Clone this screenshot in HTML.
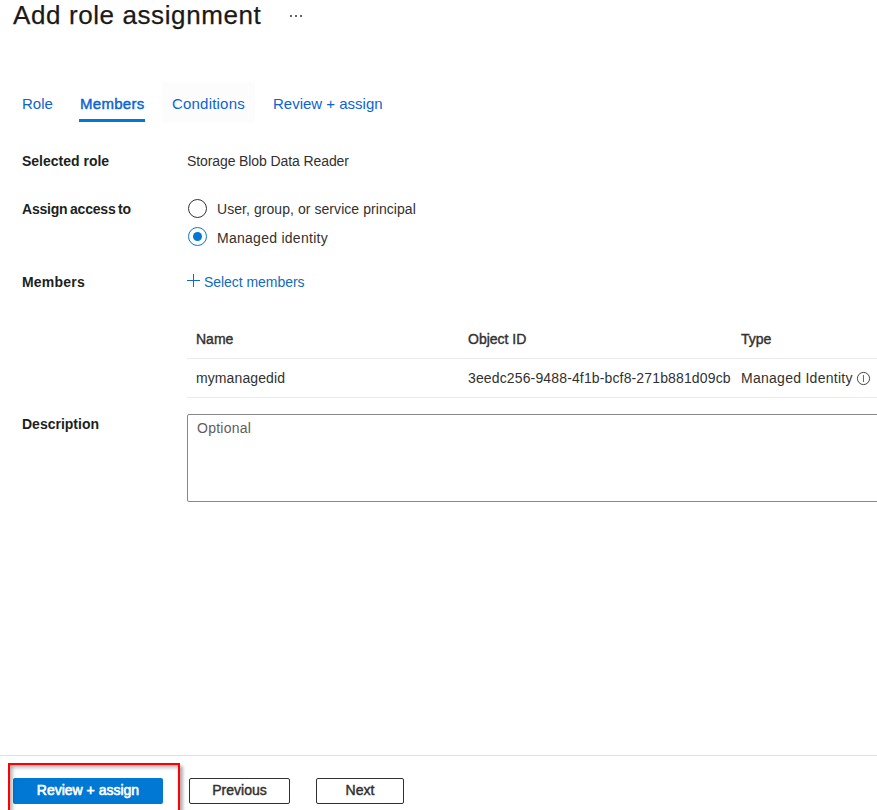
<!DOCTYPE html>
<html><head><meta charset="utf-8">
<style>
html,body{margin:0;padding:0;background:#fff;}
body{width:877px;height:810px;position:relative;overflow:hidden;font-family:"Liberation Sans",sans-serif;color:#323130;}
.a{position:absolute;white-space:nowrap;}
.title{left:13px;top:0px;font-size:26px;color:#1b1a19;letter-spacing:0.6px;-webkit-text-stroke:0.25px #1b1a19;}
.dots{left:290px;top:15px;}
.dots i{position:absolute;width:2px;height:2px;background:#323130;border-radius:1px;top:0}
.tab{top:95px;font-size:15px;color:#0c64d2;}
.semi{-webkit-text-stroke:0.45px currentColor;}
.tabhover{left:162px;top:82px;width:93px;height:40px;background:#fcfcfc;}
.uline{left:79px;top:119px;width:66px;height:3px;background:#0078d4;}
.lbl{left:22px;font-size:14px;font-weight:bold;color:#201f1e;}
.txt{font-size:14px;color:#323130;}
.radio{width:17px;height:17px;border:1px solid #323130;border-radius:50%;}
.radio.on{border-color:#0078d4;}
.radio.on i{position:absolute;left:4px;top:4px;width:9px;height:9px;border-radius:50%;background:#0078d4;}
.link{color:#0f6cbd;font-size:14px;}
.hline{height:1px;background:#edebe9;}
.th{font-size:14px;color:#323130;top:331px;-webkit-text-stroke:0.4px #323130;}
.td{font-size:14px;color:#323130;top:370px;}
.textarea{left:187px;top:414px;width:700px;height:86px;border:1px solid #8a8886;border-radius:2px;}
.ph{left:197px;top:420px;font-size:14px;color:#605e5c;letter-spacing:0.25px;}
.foot{left:0;top:755px;width:877px;height:1px;background:#e1dfdd;}
.btn{top:778px;height:24px;border:1px solid #323130;border-radius:2px;font-size:14px;text-align:center;line-height:23px;color:#323130;-webkit-text-stroke:0.45px currentColor;}
.primary{left:13px;width:150px;height:26px;border:none;background:#0078d4;color:#fff;line-height:25px;-webkit-text-stroke:0.6px #fff;}
.redbox{left:8px;top:763px;width:168px;height:60px;border:2px solid #ff0000;box-shadow:3px 3px 3px rgba(0,0,0,.3), inset 2px 2px 4px rgba(0,0,0,.35);}
</style></head>
<body>
<div class="a title">Add role assignment</div>
<div class="a dots"><i style="left:0"></i><i style="left:5px"></i><i style="left:10px"></i></div>

<div class="a tabhover"></div>
<div class="a tab" style="left:22px">Role</div>
<div class="a tab semi" style="left:80px;letter-spacing:0.3px">Members</div>
<div class="a tab" style="left:172px;letter-spacing:0.2px">Conditions</div>
<div class="a tab" style="left:273px">Review + assign</div>
<div class="a uline"></div>

<div class="a lbl" style="top:153px">Selected role</div>
<div class="a txt" style="left:187px;top:153px;letter-spacing:-0.1px">Storage Blob Data Reader</div>

<div class="a lbl" style="top:201px;letter-spacing:-0.2px;word-spacing:-1.2px">Assign access to</div>
<div class="a radio" style="left:188px;top:199px"></div>
<div class="a txt" style="left:217px;top:201px;letter-spacing:0.06px">User, group, or service principal</div>
<div class="a radio on" style="left:188px;top:227px"><i></i></div>
<div class="a txt" style="left:217px;top:230px;letter-spacing:0.27px">Managed identity</div>

<div class="a lbl" style="top:274px;letter-spacing:0.2px">Members</div>
<div class="a" style="left:187px;top:280px;width:13px;height:1px;background:#0c6ad0"></div><div class="a" style="left:193px;top:274px;width:1px;height:13px;background:#0c6ad0"></div><div class="a link" style="left:204px;top:274px;letter-spacing:-0.05px">Select members</div>

<div class="a th" style="left:196px">Name</div>
<div class="a th" style="left:468px">Object ID</div>
<div class="a th" style="left:741px">Type</div>
<div class="a hline" style="left:187px;top:358px;width:690px"></div>
<div class="a td" style="left:196px;letter-spacing:0.1px">mymanagedid</div>
<div class="a td" style="left:468px;letter-spacing:0.14px">3eedc256-9488-4f1b-bcf8-271b881d09cb</div>
<div class="a td" style="left:741px;letter-spacing:0.27px">Managed Identity</div>
<div class="a hline" style="left:187px;top:397px;width:690px"></div>
<svg class="a" style="left:856px;top:371px" width="15" height="15" viewBox="0 0 15 15"><circle cx="7.5" cy="7.5" r="6.1" fill="none" stroke="#484644" stroke-width="1"/><line x1="7.5" y1="4" x2="7.5" y2="11" stroke="#5a5856" stroke-width="0.9"/></svg>

<div class="a lbl" style="top:416px">Description</div>
<div class="a textarea"></div>
<div class="a ph">Optional</div>

<div class="a foot"></div>
<div class="a btn primary">Review + assign</div>
<div class="a btn" style="left:189px;width:99px">Previous</div>
<div class="a btn" style="left:316px;width:86px">Next</div>
<div class="a redbox"></div>
</body></html>
